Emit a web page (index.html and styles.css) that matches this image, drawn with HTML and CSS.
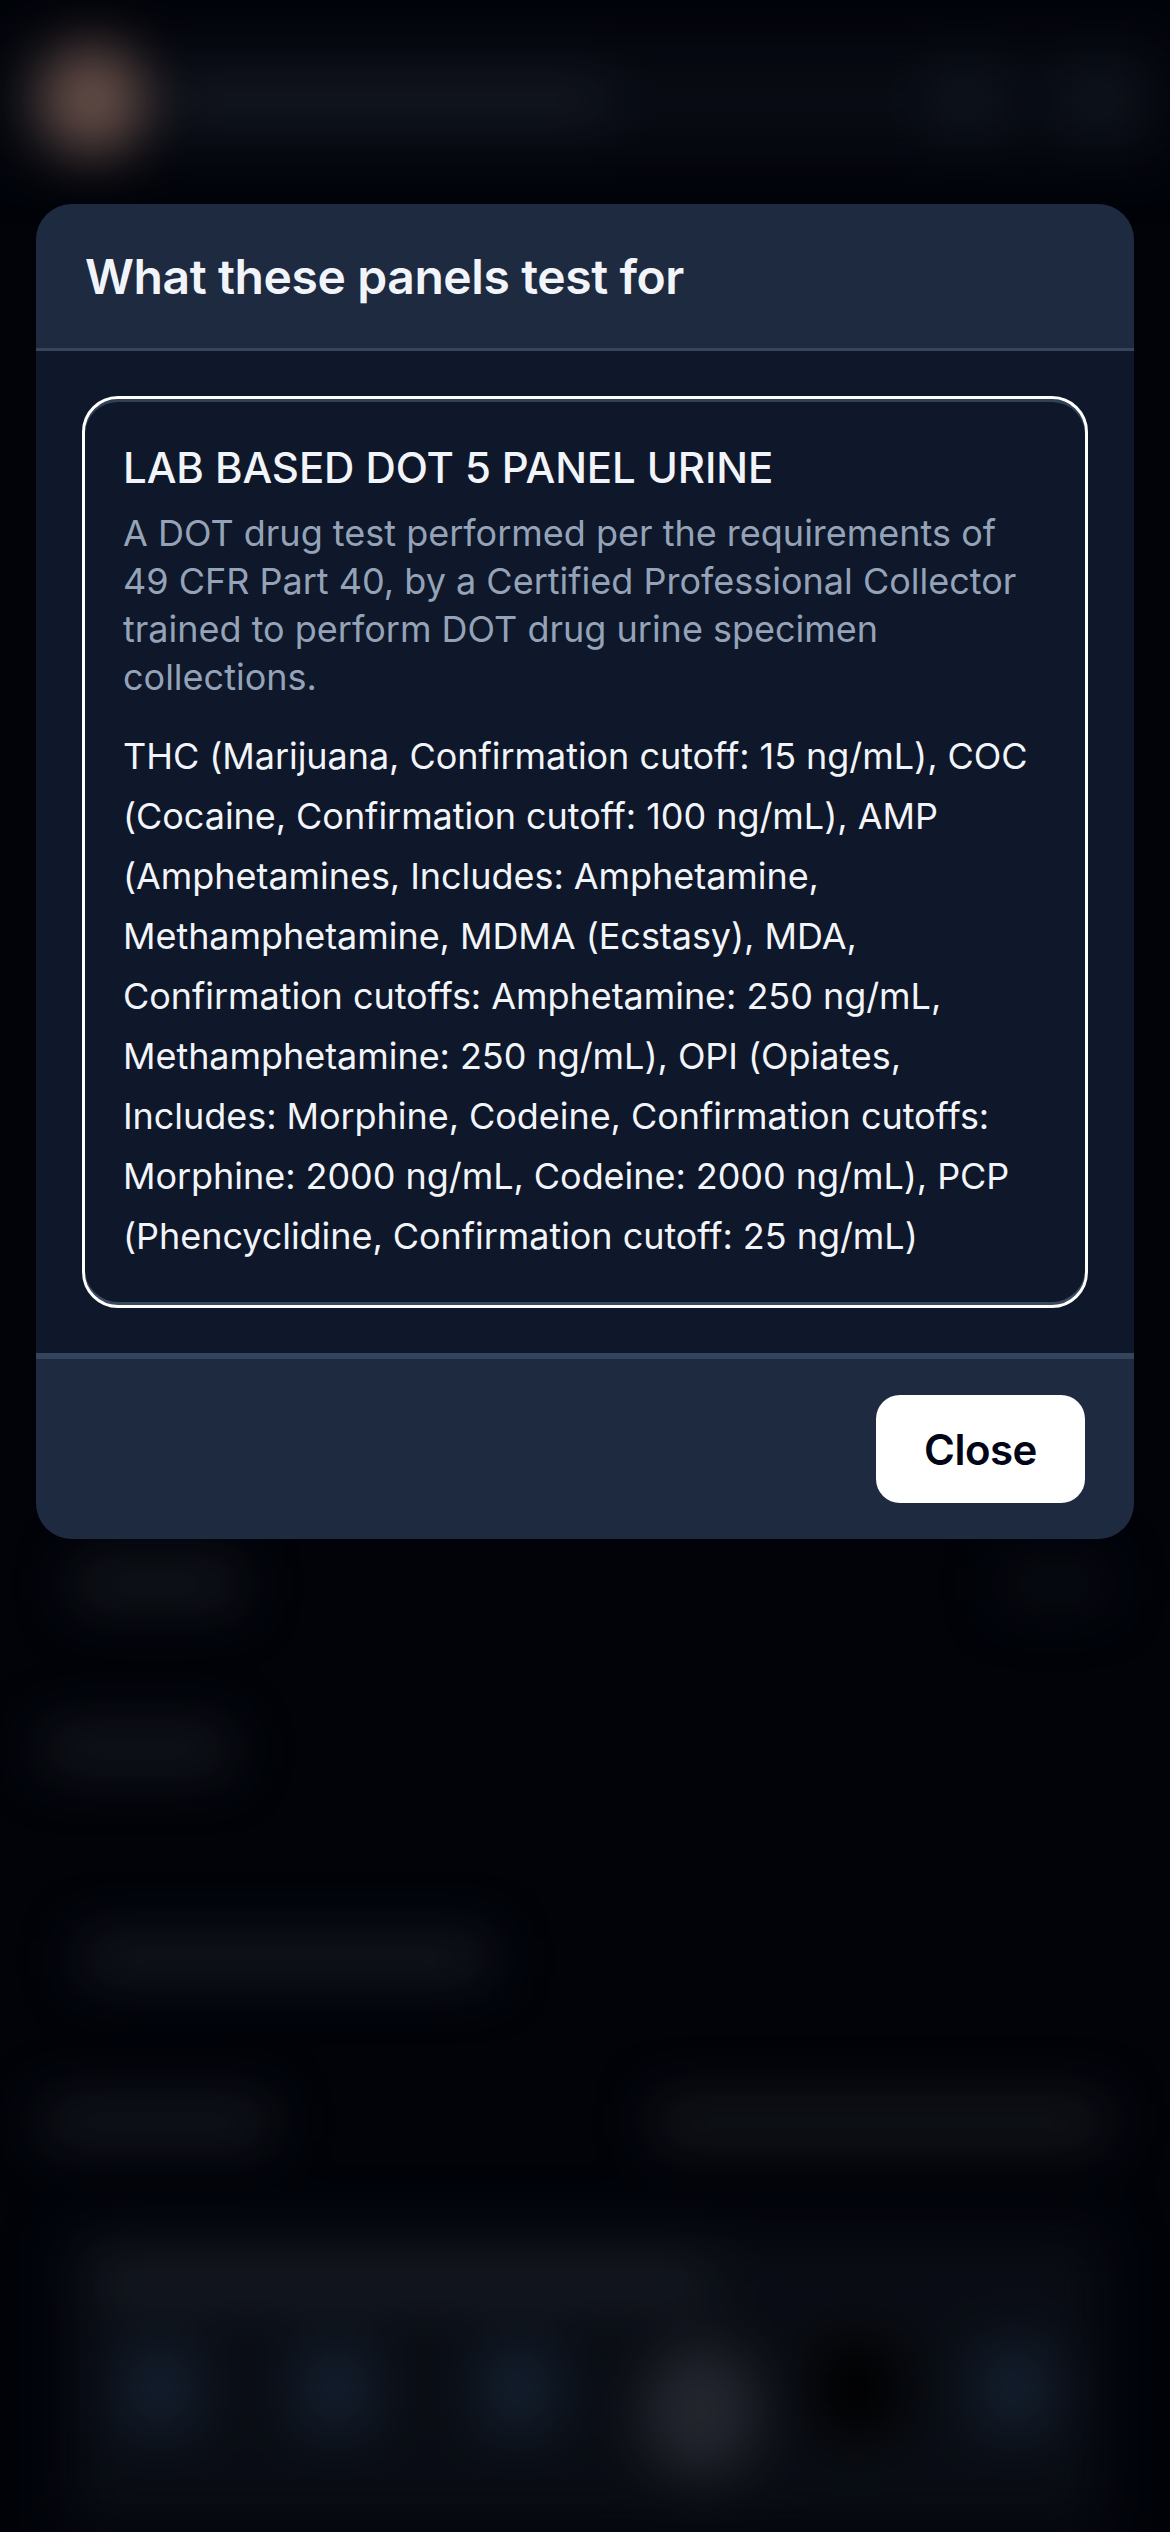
FILE: index.html
```html
<!DOCTYPE html>
<html lang="en">
<head>
<meta charset="utf-8">
<title>What these panels test for</title>
<link rel="stylesheet" href="styles.css">
</head>
<body>
<div class="page" aria-hidden="true">
  <div class="top">
    <div class="avatar"></div>
    <div class="name"></div>
    <div class="spacer"></div>
    <div class="ico"></div>
    <div class="ico"></div>
  </div>
  <div class="row r1"><div class="blob w165"></div><div class="spacer"></div><div class="blob w100 dim"></div></div>
  <div class="row r2"><div class="blob w185"></div></div>
  <div class="row r3"><div class="blob w408"></div></div>
  <div class="row r4"><div class="blob w225"></div><div class="spacer"></div><div class="blob w448"></div></div>
  <div class="panel">
    <div class="row r5"><div class="blob w613"></div></div>
    <div class="tabs">
      <div class="tab"></div><div class="tab"></div><div class="tab"></div><div class="tab big"></div><div class="tab none"></div><div class="tab"></div>
    </div>
  </div>
</div>
<div class="backdrop">
  <section class="modal">
    <header class="modal-head"><h2>What these panels test for</h2></header>
    <div class="modal-body">
      <article class="card">
        <h3>LAB BASED DOT 5 PANEL URINE</h3>
        <p class="desc">A DOT drug test performed per the requirements of 49 CFR Part 40, by a Certified Professional Collector trained to perform DOT drug urine specimen collections.</p>
        <p class="detail">THC (Marijuana, Confirmation cutoff: 15 ng/mL), COC (Cocaine, Confirmation cutoff: 100 ng/mL), AMP (Amphetamines, Includes: Amphetamine, Methamphetamine, MDMA (Ecstasy), MDA, Confirmation cutoffs: Amphetamine: 250 ng/mL, Methamphetamine: 250 ng/mL), OPI (Opiates, Includes: Morphine, Codeine, Confirmation cutoffs: Morphine: 2000 ng/mL, Codeine: 2000 ng/mL), PCP (Phencyclidine, Confirmation cutoff: 25 ng/mL)</p>
      </article>
    </div>
    <footer class="modal-foot"><button class="close" type="button">Close</button></footer>
  </section>
</div>
</body>
</html>
```
FILE: styles.css
```css
* { box-sizing: border-box; }
html, body { margin: 0; height: 2532px; overflow: hidden; background: #02040c; }
body { position: relative; font-family: Inter, "Noto Sans", sans-serif; }

.page { height: 2532px; filter: blur(27px); display: flex; flex-direction: column; padding-top: 40px; }
.top { display: flex; align-items: center; gap: 30px; height: 120px; padding-left: 38px; background: #0a0e18; }
.avatar { width: 108px; height: 112px; border-radius: 50%; background: #7c5f58; }
.name { width: 430px; height: 44px; background: #1a1f2b; }
.ico { width: 60px; height: 70px; background: #141a24; margin-right: 42px; }
.spacer { flex: 1; }
.row { display: flex; align-items: center; height: 44px; padding: 0 66px 0 45px; }
.blob { height: 44px; background: #1b1f27; }
.dim { background: #0d1119; }
.w165 { width: 165px; margin-left: 30px; }
.w100 { width: 100px; }
.w185 { width: 185px; }
.w408 { width: 408px; margin-left: 37px; background: #1c2029; }
.w225 { width: 225px; }
.w448 { width: 448px; background: #1b1e25; }
.w613 { width: 613px; height: 50px; background: #1b202a; }
.r1 { margin-top: 1402px; }
.r2 { margin-top: 121px; }
.r3 { margin-top: 165px; }
.r4 { margin-top: 120px; }
.panel { flex: 1; margin: 85px 66px 0; padding-top: 26px; background: #0c1019; }
.r5 { height: 50px; padding: 0; margin-left: 31px; }
.tabs { display: grid; grid-template-columns: 176px 176px 190px 174px 140px 174px; justify-items: center; align-items: start; margin: 38px 0 0 6px; }
.tab { width: 80px; height: 90px; background: #182639; }
.tab.big { width: 120px; height: 135px; border-radius: 50%; background: #2d2f3a; }
.tab.none { background: #000; }

.backdrop { position: absolute; inset: 0; display: flex; flex-direction: column; align-items: center; padding-top: 204px; background: rgba(0, 0, 0, .2); }
.modal { width: 1098px; border-radius: 36px; overflow: hidden; background: #0f172a; }
.modal-head { height: 147px; padding: 0 49px; display: flex; align-items: center; background: #1e2a40; border-bottom: 3px solid #364559; }
.modal-head h2 { margin: 0; font-size: 48px; font-weight: 600; letter-spacing: -.4px; color: #f1f5f9; }
.modal-body { padding: 45px 46px; border-bottom: 3px solid #34445c; }
.card { border: 3px solid #fff; border-radius: 36px; padding: 39px 38px 39px; box-shadow: inset 0 3px 0 #334155, inset 0 -3px 0 #3a4a60; }
.card h3 { margin: 0; font-size: 42px; line-height: 60px; font-weight: 500; letter-spacing: -.1px; color: #f1f5f9; }
.desc { margin: 11px 0 0; font-size: 36px; line-height: 48px; color: #94a3b8; }
.detail { margin: 25px 0 0; font-size: 36px; line-height: 60px; letter-spacing: -.05px; color: #f1f5f9; }
.modal-foot { height: 183px; display: flex; justify-content: flex-end; align-items: center; padding: 0 49px; background: #1e2a40; border-top: 3px solid #34445c; }
.close { width: 209px; height: 108px; border: 0; border-radius: 24px; background: #fff; color: #020617; font: 600 42px Inter, sans-serif; letter-spacing: -.5px; }
```
